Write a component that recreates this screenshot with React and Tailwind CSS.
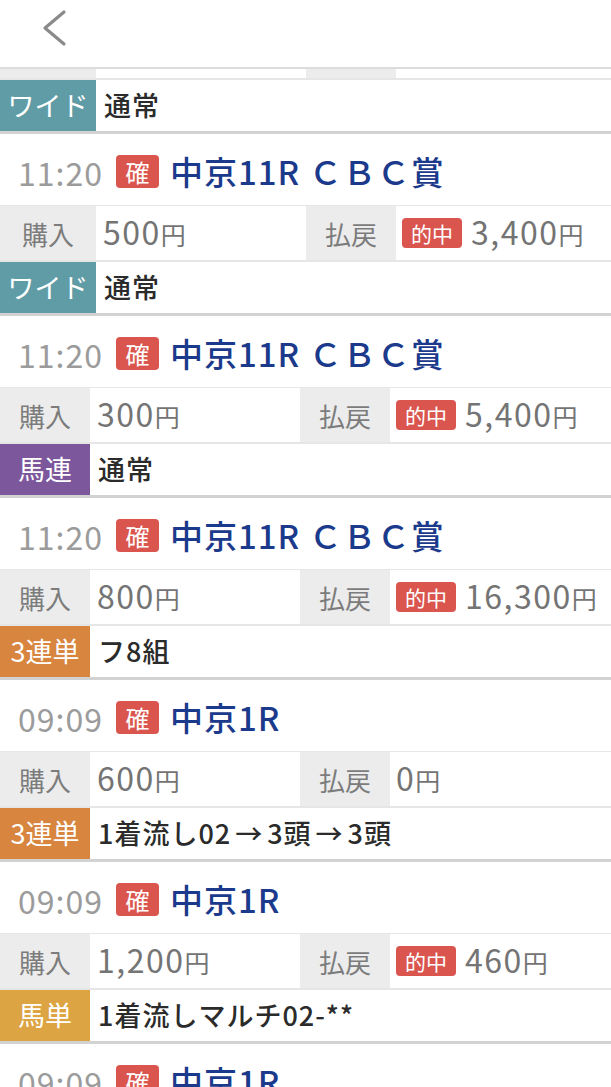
import React from 'react'

const font = { fontFamily: '"Noto Sans CJK JP", "Noto Sans", sans-serif' }

const bets = [
  { time: '11:20', race: '中京11R ＣＢＣ賞', buy: '500', pay: '3,400', hit: true, type: 'ワイド', color: 'bg-[#5f9ca6]', wide: true, detail: '通常' },
  { time: '11:20', race: '中京11R ＣＢＣ賞', buy: '300', pay: '5,400', hit: true, type: '馬連', color: 'bg-[#7d579c]', detail: '通常' },
  { time: '11:20', race: '中京11R ＣＢＣ賞', buy: '800', pay: '16,300', hit: true, type: '3連単', color: 'bg-[#d8853f]', detail: 'フ8組' },
  { time: '09:09', race: '中京1R', buy: '600', pay: '0', hit: false, type: '3連単', color: 'bg-[#d8853f]', detail: '1着流し02→3頭→3頭' },
  { time: '09:09', race: '中京1R', buy: '1,200', pay: '460', hit: true, type: '馬単', color: 'bg-[#dca443]', detail: '1着流しマルチ02-**' },
  { time: '09:09', race: '中京1R', buy: '400', pay: '0', hit: false, type: '馬単', color: 'bg-[#dca443]', detail: '通常' },
]

function Yen({ value }) {
  return (
    <span className="text-[#747474] text-[32px] leading-none tracking-[1.5px] -mt-[4px]">
      {value}
      <span className="text-[25px] tracking-normal">円</span>
    </span>
  )
}

function Detail({ text }) {
  // arrows are drawn wider in the original font
  const parts = text.split('→')
  return (
    <div className="flex items-center pl-[8px] text-[27px] text-[#2b2b2b] font-medium tracking-[1px]">
      {parts.map((p, i) => (
        <React.Fragment key={i}>
          {i > 0 && <span className="mx-[4px]">→</span>}
          {p}
        </React.Fragment>
      ))}
    </div>
  )
}

function TypeRow({ type, color, wide, detail }) {
  return (
    <div className="flex h-[51px]">
      <div className={`${wide ? 'w-[96px]' : 'w-[90px]'} ${color} flex items-center justify-center text-white text-[27px] shrink-0`}>
        {type}
      </div>
      <Detail text={detail} />
    </div>
  )
}

function BetCard({ bet }) {
  const labelW = bet.wide ? 'w-[96px]' : 'w-[90px]'
  return (
    <div className="border-b-[3px] border-[#d2d2d2]">
      {/* title */}
      <div className="h-[71px] flex items-center pl-[18px] pt-[4px]">
        <span className="text-[32px] text-[#9b9b9b] leading-none tracking-[1px]">{bet.time}</span>
        <span className="ml-[13px] w-[43px] h-[33px] rounded-[4px] bg-[#d9554e] text-white text-[24px] flex items-center justify-center leading-none">確</span>
        <span className="ml-[11px] text-[33px] text-[#1b3a8c] font-medium leading-none tracking-[1px]">{bet.race}</span>
      </div>

      {/* amounts */}
      <div className="flex h-[55px] border-t border-[#e6e6e6]">
        <div className={`${labelW} shrink-0 bg-[#ececec] flex items-center justify-center text-[26px] text-[#7c7c7c]`}>購入</div>
        <div className="w-[210px] shrink-0 flex items-center pl-[7px]">
          <Yen value={bet.buy} />
        </div>
        <div className="w-[90px] shrink-0 bg-[#ececec] flex items-center justify-center text-[26px] text-[#7c7c7c]">払戻</div>
        <div className="flex-1 flex items-center pl-[6px] gap-[9px]">
          {bet.hit && (
            <span className="w-[60px] h-[30px] rounded-[4px] bg-[#d9554e] text-white text-[21px] flex items-center justify-center leading-none">的中</span>
          )}
          <Yen value={bet.pay} />
        </div>
      </div>
      <div className="h-[2px] bg-[#e6e6e6]" />

      <TypeRow {...bet} />
    </div>
  )
}

export default function App() {
  return (
    <div className="w-[611px] min-h-screen bg-white" style={font}>
      {/* header */}
      <div className="h-[69px] border-b-2 border-[#dcdcdc] flex items-start">
        <svg width="26" height="40" viewBox="0 0 26 40" className="ml-[41px] mt-[9px]">
          <polyline points="23,3 4,19 23,35" fill="none" stroke="#8a8a8a" strokeWidth="3.2" strokeLinecap="round" strokeLinejoin="round" />
        </svg>
      </div>

      {/* tail of the previous bet */}
      <div className="border-b-[3px] border-[#d2d2d2]">
        <div className="flex h-[9px]">
          <div className="w-[96px] bg-[#ececec]" />
          <div className="w-[210px]" />
          <div className="w-[90px] bg-[#ececec]" />
          <div className="flex-1" />
        </div>
        <div className="h-[2px] bg-[#e6e6e6]" />
        <TypeRow type="ワイド" color="bg-[#5f9ca6]" wide detail="通常" />
      </div>

      {bets.map((bet, i) => (
        <BetCard key={i} bet={bet} />
      ))}
    </div>
  )
}
